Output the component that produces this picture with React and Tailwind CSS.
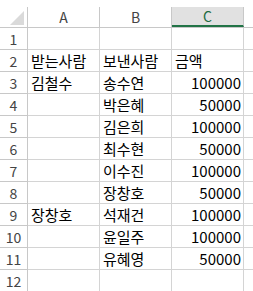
const rows = [
  ["", "", ""],
  ["받는사람", "보낸사람", "금액"],
  ["김철수", "송수연", "100000"],
  ["", "박은혜", "50000"],
  ["", "김은희", "100000"],
  ["", "최수현", "50000"],
  ["", "이수진", "100000"],
  ["", "장창호", "50000"],
  ["장창호", "석재건", "100000"],
  ["", "윤일주", "100000"],
  ["", "유혜영", "50000"],
  ["", "", ""],
];

export default function App() {
  return (
    <div
      className="w-[253px] h-[291px] overflow-hidden bg-white text-black"
      style={{ fontFamily: '"Noto Sans CJK KR", "Noto Sans", sans-serif' }}
    >
      <div className="h-[7px]" />

      {/* COLUMN HEADERS */}
      <div className="flex h-[21px] border-b border-[#c8c8c8] text-[14px] text-[#444]">
        <div className="w-[28px] shrink-0 border-r border-[#c8c8c8] relative">
          <div className="absolute left-[10px] top-[4px] w-0 h-0 border-l-[14px] border-l-transparent border-b-[14px] border-b-[#dadada]" />
        </div>
        <div className="w-[72px] shrink-0 border-r border-[#c8c8c8] flex items-center justify-center">A</div>
        <div className="w-[72px] shrink-0 border-r border-[#c8c8c8] flex items-center justify-center">B</div>
        <div className="w-[72px] shrink-0 border-r border-[#c8c8c8] bg-[#e1e1e1] border-b-2 border-b-[#217346] flex items-center justify-center text-[#1e6b41]">C</div>
        <div className="flex-1" />
      </div>

      {/* ROWS */}
      {rows.map((r, i) => (
        <div key={i} className="flex h-[22px] text-[15px] leading-none">
          <div className="w-[28px] shrink-0 border-r border-b border-[#c8c8c8] flex items-center justify-center text-[14px] text-[#444]">
            {i + 1}
          </div>
          <div className="w-[72px] shrink-0 border-r border-b border-[#d4d4d4] flex items-center pl-[3px]">
            {r[0]}
          </div>
          <div className="w-[72px] shrink-0 border-r border-b border-[#d4d4d4] flex items-center pl-[3px]">
            {r[1]}
          </div>
          <div
            className={`w-[72px] shrink-0 border-r border-b border-[#d4d4d4] flex items-center ${
              i > 1 ? "justify-end pr-[2px]" : "pl-[3px]"
            }`}
          >
            {r[2]}
          </div>
          <div className="flex-1 border-b border-[#d4d4d4]" />
        </div>
      ))}
    </div>
  );
}
